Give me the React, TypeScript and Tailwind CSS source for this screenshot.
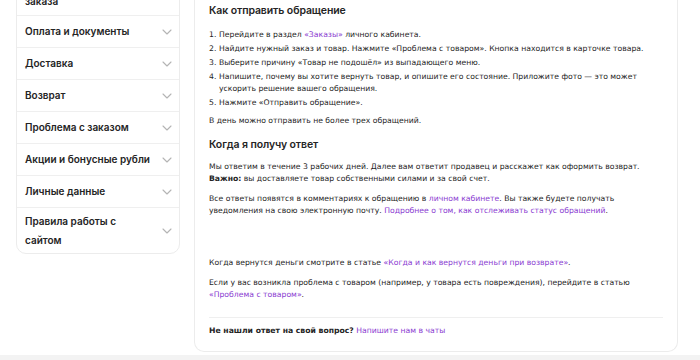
const MENU = [
  "Оформление заказа",
  "Оплата и документы",
  "Доставка",
  "Возврат",
  "Проблема с заказом",
  "Акции и бонусные рубли",
  "Личные данные",
  "Правила работы с сайтом",
];

const STEPS: React.ReactNode[] = [
  <>
    Перейдите в раздел <a className="text-[#8a3bd1]">«Заказы»</a> личного кабинета.
  </>,
  <>Найдите нужный заказ и товар. Нажмите «Проблема с товаром». Кнопка находится в карточке товара.</>,
  <>Выберите причину «Товар не подошёл» из выпадающего меню.</>,
  <>
    Напишите, почему вы хотите вернуть товар, и опишите его состояние. Приложите фото — это может
    ускорить решение вашего обращения.
  </>,
  <>Нажмите «Отправить обращение».</>,
];

function Chevron() {
  return (
    <svg width="10" height="6" viewBox="0 0 10 6" fill="none" className="shrink-0">
      <path d="M1 1l4 4 4-4" stroke="#b4b4b4" strokeWidth="1.1" strokeLinecap="round" strokeLinejoin="round" />
    </svg>
  );
}

export default function App() {
  return (
    <div className="h-[360px] w-[700px] overflow-hidden bg-white font-['DejaVu_Sans',sans-serif] text-[#242424]">
      <div className="-mt-[32px] flex items-start gap-[14px] pl-[16px]">
        {/* sidebar */}
        <div className="w-[164px] overflow-hidden rounded-[10px] border border-[#ececec] font-['Inter',sans-serif]">
          {MENU.map((m, i) => {
            const two = i === 0 || i === MENU.length - 1;
            return (
              <div
                key={m}
                className={`flex items-center justify-between border-[#efefef] pl-[8px] pr-[7px] ${
                  i > 0 ? "border-t" : ""
                } ${two ? "h-[46px]" : "h-[32px]"}`}
              >
                <span className={`text-[10px] font-semibold leading-[19px] text-[#242424] ${two ? "w-[100px]" : ""}`}>
                  {m}
                </span>
                <Chevron />
              </div>
            );
          })}
        </div>

        {/* article */}
        <div className="mr-[22px] flex-1">
          <div className="rounded-b-[10px] border border-t-0 border-[#ececec] px-[14px] pt-[35px] pb-[14px]">
            <h2 className="font-['Inter',sans-serif] text-[10.5px] font-semibold leading-[16px] tracking-[-0.1px]">
              Как отправить обращение
            </h2>

            <ol className="mt-[10px] flex flex-col gap-[2px] text-[7.7px] leading-[12px]">
              {STEPS.map((s, i) => (
                <li key={i} className="flex">
                  <span className="w-[10px] shrink-0">{i + 1}.</span>
                  <span>{s}</span>
                </li>
              ))}
            </ol>

            <p className="mt-[6px] text-[7.7px] leading-[12px]">В день можно отправить не более трех обращений.</p>

            <h2 className="mt-[10px] font-['Inter',sans-serif] text-[10.5px] font-semibold leading-[16px] tracking-[-0.1px]">
              Когда я получу ответ
            </h2>

            <p className="mt-[8px] text-[7.7px] leading-[12px]">
              Мы ответим в течение 3 рабочих дней. Далее вам ответит продавец и расскажет как оформить возврат.
              <br />
              <b>Важно:</b> вы доставляете товар собственными силами и за свой счет.
            </p>

            <p className="mt-[8px] text-[7.7px] leading-[12px]">
              Все ответы появятся в комментариях к обращению в <a className="text-[#8a3bd1]">личном кабинете</a>. Вы
              также будете получать
              <br />
              уведомления на свою электронную почту.{" "}
              <a className="text-[#8a3bd1]">Подробнее о том, как отслеживать статус обращений</a>.
            </p>

            <div className="h-[40px]" />

            <p className="text-[7.7px] leading-[12px]">
              Когда вернутся деньги смотрите в статье{" "}
              <a className="text-[#8a3bd1]">«Когда и как вернутся деньги при возврате»</a>.
            </p>

            <p className="mt-[8px] text-[7.7px] leading-[12px]">
              Если у вас возникла проблема с товаром (например, у товара есть повреждения), перейдите в статью
              <br />
              <a className="text-[#8a3bd1]">«Проблема с товаром»</a>.
            </p>

            <div className="mt-[16px] border-t border-[#efefef] pt-[7px] text-[7.7px] leading-[12px]">
              <b>Не нашли ответ на свой вопрос?</b> <a className="text-[#8a3bd1]">Напишите нам в чаты</a>
            </div>
          </div>
        </div>
      </div>
      <div className="mt-[3px] h-[20px] bg-[#f3f3f3]" />
    </div>
  );
}
